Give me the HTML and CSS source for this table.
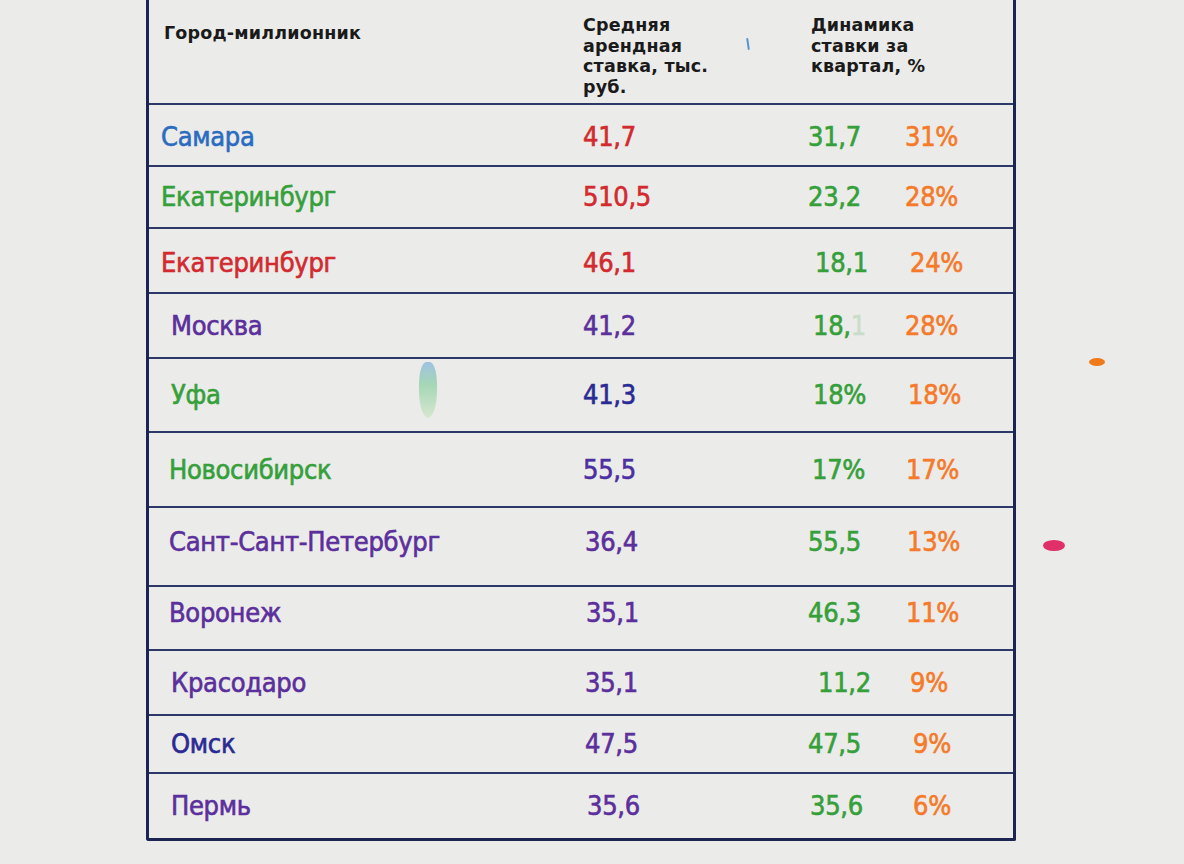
FILE: index.html
```html
<!DOCTYPE html>
<html lang="ru">
<head>
<meta charset="utf-8">
<title>Города-миллионники</title>
<link rel="stylesheet" href="styles.css">
</head>
<body>
<div class="page">
  <div class="sheet">
    <div class="row head">
      <div class="hcell c1"><span class="htext">Город-миллионник</span></div>
      <div class="hcell c2"><span class="htext w2">Средняя арендная ставка, тыс. руб.</span></div>
      <div class="hcell c34"><span class="htext w3">Динамика ставки за квартал, %</span></div>
    </div>
    <div class="row h62 up3">
      <div class="cell c1 blue">Самара</div>
      <div class="cell c2 red">41,7</div>
      <div class="cell c3 green">31,7</div>
      <div class="cell c4 orange">31%</div>
    </div>
    <div class="row h62">
      <div class="cell c1 green">Екатеринбург</div>
      <div class="cell c2 red">510,5</div>
      <div class="cell c3 green">23,2</div>
      <div class="cell c4 orange">28%</div>
    </div>
    <div class="row h65 up3">
      <div class="cell c1 red">Екатеринбург</div>
      <div class="cell c2 red">46,1</div>
      <div class="cell c3 green in7">18,1</div>
      <div class="cell c4 orange in5">24%</div>
    </div>
    <div class="row h65">
      <div class="cell c1 purple in10">Москва</div>
      <div class="cell c2 purple">41,2</div>
      <div class="cell c3 green in5">18,<span class="ghost">1</span></div>
      <div class="cell c4 orange">28%</div>
    </div>
    <div class="row h74">
      <div class="cell c1 green in10">Уфа</div>
      <div class="cell c2 navy">41,3</div>
      <div class="cell c3 green in5">18%</div>
      <div class="cell c4 orange in3">18%</div>
    </div>
    <div class="row h75">
      <div class="cell c1 green in8">Новосибирск</div>
      <div class="cell c2 violet">55,5</div>
      <div class="cell c3 green in4">17%</div>
      <div class="cell c4 orange in1">17%</div>
    </div>
    <div class="row h79 dn6">
      <div class="cell c1 purple in8">Сант-Сант-Петербург</div>
      <div class="cell c2 purple in2">36,4</div>
      <div class="cell c3 green">55,5</div>
      <div class="cell c4 orange in2">13%</div>
    </div>
    <div class="row h64 dn6">
      <div class="cell c1 purple in8">Воронеж</div>
      <div class="cell c2 purple in3">35,1</div>
      <div class="cell c3 green">46,3</div>
      <div class="cell c4 orange in1">11%</div>
    </div>
    <div class="row h65">
      <div class="cell c1 purple in10">Красодаро</div>
      <div class="cell c2 purple in2">35,1</div>
      <div class="cell c3 green in10">11,2</div>
      <div class="cell c4 orange in5">9%</div>
    </div>
    <div class="row h58">
      <div class="cell c1 navy in10">Омск</div>
      <div class="cell c2 purple in2">47,5</div>
      <div class="cell c3 green">47,5</div>
      <div class="cell c4 orange in8">9%</div>
    </div>
    <div class="row h64 last">
      <div class="cell c1 purple in10">Пермь</div>
      <div class="cell c2 purple in4">35,6</div>
      <div class="cell c3 green in2">35,6</div>
      <div class="cell c4 orange in8">6%</div>
    </div>
  </div>
  <span class="mark tick"></span>
  <span class="mark smudge"></span>
  <span class="mark dot-orange"></span>
  <span class="mark dot-pink"></span>
</div>
</body>
</html>
```

FILE: styles.css
```css
* { box-sizing: border-box; }

html, body {
  margin: 0;
  padding: 0;
  background: #ebebe9;
}

.page {
  position: relative;
  width: 1184px;
  height: 864px;
  overflow: hidden;
  background: #ebebe9;
}

.sheet {
  margin-left: 146px;
  width: 870px;
  border-left: 3px solid #1c2452;
  border-right: 3px solid #1c2452;
  border-bottom: 3px solid #1c2452;
  border-radius: 0 0 2px 3px;
}

.row {
  display: grid;
  grid-template-columns: 434px 225px 97px 1fr;
  align-items: center;
  border-bottom: 2px solid #2e3868;
  font-family: "DejaVu Sans Condensed", "DejaVu Sans", sans-serif;
  font-size: 27px;
  line-height: 32px;
  letter-spacing: -0.3px;
  -webkit-text-stroke: 0.6px currentColor;
}

.row.last { border-bottom: none; }

.head {
  height: 105px;
  align-items: start;
  font-family: "DejaVu Sans", "Liberation Sans", Arial, sans-serif;
  font-weight: 700;
  font-size: 17.5px;
  line-height: 20.5px;
  letter-spacing: 0.2px;
  color: #1a1a1a;
  -webkit-text-stroke: 0;
}

.hcell { white-space: normal; }
.head .c1 { padding-top: 23px; padding-left: 15px; }
.head .c2 { padding-top: 15px; }
.head .c34 { grid-column: 3 / span 2; padding-top: 15px; padding-left: 3px; }

.htext { display: block; }
.w2 { width: 137px; }
.w3 { width: 127px; }

.cell { white-space: nowrap; }
.c1 { padding-left: 12px; }

.h58 { height: 58px; }
.h62 { height: 62px; }
.h64 { height: 64px; }
.h65 { height: 65px; }
.h74 { height: 74px; }
.h75 { height: 75px; }
.h79 { height: 79px; }

.up3 { padding-top: 4px; }
.dn6 { padding-bottom: 10px; }

.in1 { padding-left: 1px; }
.in2 { padding-left: 2px; }
.in3 { padding-left: 3px; }
.in4 { padding-left: 4px; }
.in5 { padding-left: 5px; }
.in7 { padding-left: 7px; }
.in8 { padding-left: 8px; }
.in10 { padding-left: 10px; }
.c1.in8 { padding-left: 20px; }
.c1.in10 { padding-left: 22px; }

.blue { color: #2b6cc0; }
.red { color: #d22a2f; }
.green { color: #35a03a; }
.orange { color: #f57a2a; }
.purple { color: #5b2f9c; }
.violet { color: #4c2fa0; }
.navy { color: #2a2a94; }

.ghost { color: #35a03a; opacity: 0.18; }

.mark { position: absolute; display: block; }

.tick {
  left: 747px;
  top: 38px;
  width: 2px;
  height: 12px;
  background: #5b93d0;
  border-radius: 1px;
  transform: rotate(-8deg);
}

.smudge {
  left: 419px;
  top: 362px;
  width: 18px;
  height: 56px;
  border-radius: 40% 40% 50% 50%;
  background: linear-gradient(180deg, rgba(100,160,220,0.55) 0%, rgba(80,190,120,0.45) 40%, rgba(170,220,150,0.3) 100%);
}

.dot-orange {
  left: 1089px;
  top: 358px;
  width: 16px;
  height: 8px;
  border-radius: 50%;
  background: #f07a1a;
}

.dot-pink {
  left: 1043px;
  top: 540px;
  width: 22px;
  height: 11px;
  border-radius: 50%;
  background: #e0306a;
}
```
